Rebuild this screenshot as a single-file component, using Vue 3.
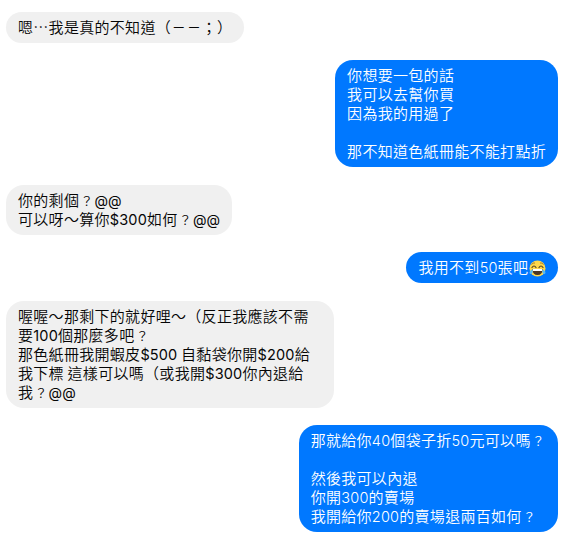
<script setup>
import { ref } from 'vue';

const messages = ref([
  { id: 1, mine: false, lines: ['嗯…我是真的不知道（ーー；）'] },
  { id: 2, mine: true, lines: ['你想要一包的話', '我可以去幫你買', '因為我的用過了', '', '那不知道色紙冊能不能打點折'] },
  { id: 3, mine: false, lines: ['你的剩個？@@', '可以呀～算你$300如何？@@'] },
  { id: 4, mine: true, lines: ['我用不到50張吧'], laugh: true },
  {
    id: 5,
    mine: false,
    wide: true,
    lines: [
      '喔喔～那剩下的就好哩～（反正我應該不需',
      '要100個那麼多吧？',
      '那色紙冊我開蝦皮$500 自黏袋你開$200給',
      '我下標 這樣可以嗎（或我開$300你內退給',
      '我？@@'
    ]
  },
  { id: 6, mine: true, lines: ['那就給你40個袋子折50元可以嗎？', '', '然後我可以內退', '你開300的賣場', '我開給你200的賣場退兩百如何？'] }
]);

// latin runs and small full-width marks get their own size
function split(line) {
  return line.split(/([$0-9]+|@+|[ー？])/).filter((part) => part !== '');
}

function kind(part) {
  if (part[0] == '@') return 'at';
  if (/^[ー？]/.test(part)) return 'mark';
  return /^[$0-9]/.test(part) ? 'num' : '';
}
</script>

<template>
  <div class="chat">
    <div v-for="m in messages" :key="m.id" class="row" :class="{ mine: m.mine }">
      <div class="bubble" :class="{ wide: m.wide }">
        <div v-for="(line, i) in m.lines" :key="i" class="line">
          <span v-for="(part, j) in split(line)" :key="j" :class="kind(part)">{{ part }}</span>
          <svg v-if="m.laugh" class="emoji" viewBox="0 0 34 34">
            <circle cx="17" cy="17" r="16" fill="#ffd84c" />
            <path d="M5 9Q8 5 12 6M29 9Q26 5 22 6" fill="none" stroke="#9a6a1c" stroke-width="1.6" />
            <path d="M6 15Q10 9 14 15M20 15Q24 9 28 15" fill="none" stroke="#55401f" stroke-width="2.4" stroke-linecap="round" />
            <path d="M7 18H27Q27 30 17 30Q7 30 7 18Z" fill="#4a3524" />
            <path d="M8 18H26V22H8Z" fill="#fff" />
            <path d="M7 19Q1 21 1 26Q3 30 7 26Q8 23 7 19ZM27 19Q33 21 33 26Q31 30 27 26Q26 23 27 19Z" fill="#58b8f0" />
          </svg>
        </div>
      </div>
    </div>
  </div>
</template>

<style>
body {
  background: #fff;
}
</style>

<style scoped>
.chat {
  padding: 12px 16px 9px 6px;
  font-family: "Noto Sans CJK TC", sans-serif;
  font-size: 15px;
  font-weight: 350;
  line-height: 19px;
  letter-spacing: 0.3px;
}
.row {
  display: flex;
  margin-bottom: 17px;
}
.row.mine {
  justify-content: flex-end;
  margin-bottom: 18px;
}
.row:last-child {
  margin-bottom: 0;
}
.bubble {
  box-sizing: border-box;
  padding: 5px 12px 7px;
  border-radius: 18px;
  background: #f0f0f0;
  color: #050505;
}
.mine .bubble {
  background: #0078ff;
  color: #fff;
}
.bubble.wide {
  width: 328px;
}
.line {
  display: flex;
  align-items: baseline;
  height: 19px;
  white-space: pre;
}
.num,
.at {
  font-family: Inter, "Liberation Sans", sans-serif;
  font-weight: 400;
}
.num {
  font-size: 14.5px;
  letter-spacing: 0.15px;
}
.at {
  font-size: 14px;
  letter-spacing: 0;
}
.mine .num {
  font-weight: 300;
  letter-spacing: 0.2px;
}
.mark {
  width: 15.3px;
  font-size: 12.5px;
  line-height: 15px;
  letter-spacing: 0;
  text-align: center;
}
.emoji {
  align-self: flex-start;
  width: 17px;
  height: 17px;
  margin: 3px 0 0 0.8px;
}
</style>
